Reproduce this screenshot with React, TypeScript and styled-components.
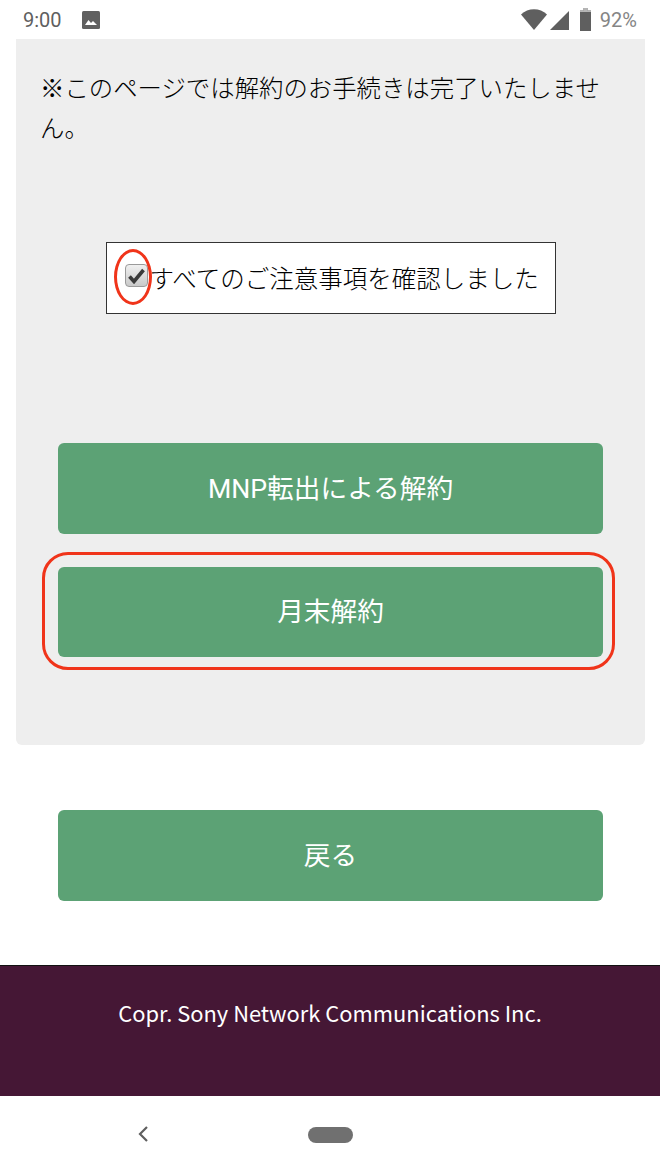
import styled, { createGlobalStyle } from "styled-components";

const GlobalStyle = createGlobalStyle`
  html, body {
    margin: 0;
    padding: 0;
    background: #fff;
  }
  body {
    font-family: Roboto, "Noto Sans CJK JP", sans-serif;
  }
`;

const Page = styled.div`
  width: 660px;
  height: 1173px;
  display: flex;
  flex-direction: column;
  overflow: hidden;
`;

const StatusBar = styled.div`
  height: 39px;
  padding: 0 23px;
  display: flex;
  align-items: center;
  color: #5f5f5f;
  font-family: Roboto, sans-serif;
  box-sizing: border-box;
`;

const Time = styled.span`
  font-size: 20px;
  margin-right: 20px;
`;

const StatusRight = styled.div`
  margin-left: auto;
  display: flex;
  align-items: center;
`;

const Percent = styled.span`
  font-size: 20px;
  color: #858585;
  margin-left: 9px;
`;

const Panel = styled.div`
  margin: 0 15px 0 16px;
  height: 706px;
  background: #eeeeee;
  border-radius: 0 0 6px 6px;
  box-sizing: border-box;
  padding: 30px 24px 0;
  display: flex;
  flex-direction: column;
`;

const Notice = styled.p`
  margin: 0;
  font-size: 24.4px;
  line-height: 40px;
  color: #000;
  font-weight: 300;
`;

const ConfirmBox = styled.div`
  position: relative;
  align-self: center;
  margin: 93px 0 0 0;
  width: 450px;
  height: 72px;
  box-sizing: border-box;
  border: 1.5px solid #333;
  background: #fff;
  display: flex;
  align-items: center;
  padding: 0 0 2px 18px;
  font-size: 24.5px;
  font-weight: 300;
  color: #000;
  white-space: nowrap;
`;

const Check = styled.span`
  width: 23px;
  height: 23px;
  box-sizing: border-box;
  margin-right: 2px;
  margin-top: -3px;
  flex: none;
  display: flex;
  align-items: center;
  justify-content: center;
  border: 1px solid #9a9a9a;
  border-radius: 4px;
  background: linear-gradient(#f0f0f0, #c9c9c9);
`;

const CheckRing = styled.span`
  position: absolute;
  left: 7px;
  top: 6px;
  width: 38px;
  height: 56px;
  box-sizing: border-box;
  border: 3px solid #f0341a;
  border-radius: 50%;
`;

const Buttons = styled.div`
  margin: 129px 18px 0;
  display: flex;
  flex-direction: column;
  gap: 33px;
`;

const GreenButton = styled.button`
  position: relative;
  width: 545px;
  height: 90.5px;
  border: none;
  border-radius: 6px;
  padding: 0 0 4px;
  background: #5ca275;
  color: #fff;
  font-family: Roboto, "Noto Sans CJK JP", sans-serif;
  font-size: 26.7px;
  display: flex;
  align-items: center;
  justify-content: center;
`;

const ButtonRing = styled.span`
  position: absolute;
  left: -16px;
  right: -12px;
  top: -15px;
  bottom: -13px;
  border: 3px solid #f0341a;
  border-radius: 26px;
`;

const BackRow = styled.div`
  margin: 65px 0 0 58px;
`;

const Footer = styled.footer`
  margin-top: 64px;
  height: 131px;
  box-sizing: border-box;
  background: #451735;
  border-top: 1px solid #111;
  color: #fff;
  font-family: "Noto Sans CJK JP", sans-serif;
  font-size: 21.9px;
  text-align: center;
  padding-top: 30px;
  line-height: 34px;
`;

const NavBar = styled.nav`
  flex: 1;
  position: relative;
  display: flex;
  align-items: center;
  justify-content: center;
  padding-top: 1px;
`;

const HomePill = styled.span`
  width: 45px;
  height: 16px;
  border-radius: 8px;
  background: #707070;
`;

const BackIcon = styled.svg`
  position: absolute;
  left: 137px;
  top: 29px;
`;

export default function App() {
  return (
    <Page>
      <GlobalStyle />
      <StatusBar>
        <Time>9:00</Time>
        <svg width="18" height="18" viewBox="0 0 18 18">
          <rect width="18" height="18" rx="1.5" fill="#606060" />
          <path d="M3 14l3.5-5 2.5 3 2-2 4 4z" fill="#fff" />
        </svg>
        <StatusRight>
          <svg width="26" height="21" viewBox="0 0 26 21">
            <path d="M0 5.5C7-1.5 19-1.5 26 5.5L13 21z" fill="#5f5f5f" />
          </svg>
          <svg width="19" height="19" viewBox="0 0 19 19" style={{ marginLeft: 3, marginTop: 2 }}>
            <path d="M19 0v19H0z" fill="#5f5f5f" />
          </svg>
          <svg width="11" height="23" viewBox="0 0 11 23" style={{ marginLeft: 11 }}>
            <path d="M3.5 0h4v2.5H11V23H0V2.5h3.5z" fill="#5f5f5f" />
            <path d="M3.5 0h4v2.5H11V4H0V2.5h3.5z" fill="#b5b5b5" />
          </svg>
          <Percent>92%</Percent>
        </StatusRight>
      </StatusBar>

      <Panel>
        <Notice>※このページでは解約のお手続きは完了いたしません。</Notice>
        <ConfirmBox>
          <Check>
            <svg width="17" height="16" viewBox="0 0 17 16">
              <path d="M1.5 8.5l4.5 5L15.5 2" fill="none" stroke="#3a3a3a" strokeWidth="3.6" />
            </svg>
          </Check>
          すべてのご注意事項を確認しました
          <CheckRing />
        </ConfirmBox>
        <Buttons>
          <GreenButton>MNP転出による解約</GreenButton>
          <GreenButton>
            月末解約
            <ButtonRing />
          </GreenButton>
        </Buttons>
      </Panel>

      <BackRow>
        <GreenButton>戻る</GreenButton>
      </BackRow>

      <Footer>Copr. Sony Network Communications Inc.</Footer>

      <NavBar>
        <BackIcon width="12" height="18" viewBox="0 0 12 18">
          <path d="M10 2L3 9l7 7" fill="none" stroke="#5f5f5f" strokeWidth="2.2" />
        </BackIcon>
        <HomePill />
      </NavBar>
    </Page>
  );
}
